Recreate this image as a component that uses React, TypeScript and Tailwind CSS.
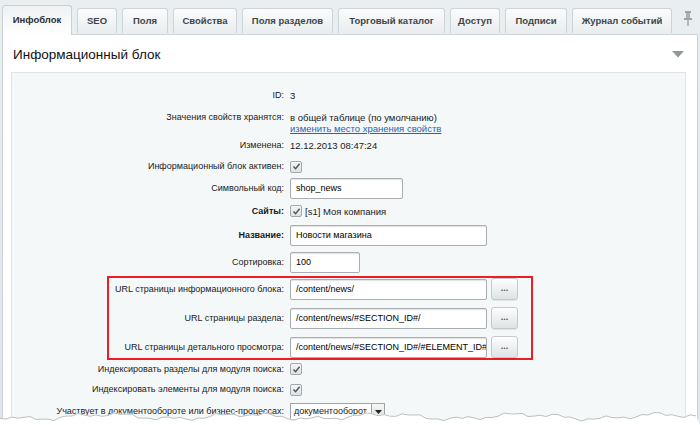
import React from "react";

const tabs: { label: string; w: string; active?: boolean }[] = [
  { label: "Инфоблок", w: "w-[70px]", active: true },
  { label: "SEO", w: "w-[40px]" },
  { label: "Поля", w: "w-[46px]" },
  { label: "Свойства", w: "w-[64px]" },
  { label: "Поля разделов", w: "w-[91px]" },
  { label: "Торговый каталог", w: "w-[107px]" },
  { label: "Доступ", w: "w-[50px]" },
  { label: "Подписи", w: "w-[62px]" },
  { label: "Журнал событий", w: "w-[100px]" },
];

function Check() {
  return (
    <span className="inline-flex w-[12px] h-[12px] rounded-[2px] border border-[#a3aaad] bg-gradient-to-b from-[#f4f6f7] to-[#dde2e4] items-center justify-center shrink-0">
      <svg width="9" height="9" viewBox="0 0 9 9">
        <path d="M1.5 4.6 L3.6 6.8 L7.6 1.8" fill="none" stroke="#4d5558" strokeWidth="1.4" />
      </svg>
    </span>
  );
}

function Input({ value, w }: { value: string; w: string }) {
  return (
    <div
      className={`${w} h-[21px] border border-[#a9aeb1] rounded-[2px] bg-white shadow-[inset_0_1px_1px_rgba(0,0,0,0.12)] flex items-center pl-[5px] overflow-hidden whitespace-nowrap text-[9px] text-[#000]`}
    >
      {value}
    </div>
  );
}

function DotsBtn() {
  return (
    <div className="w-[27px] h-[22px] ml-[4px] shrink-0 rounded-[3px] border border-[#c3c9cc] bg-gradient-to-b from-[#fdfdfd] to-[#dfe3e5] shadow-[0_1px_0_rgba(0,0,0,0.08)] flex items-center justify-center text-[9px] font-bold text-[#555] leading-none pb-[2px]">
      ...
    </div>
  );
}

function Row({
  label,
  h,
  bold,
  lw = "w-[274px]",
  children,
  top,
}: {
  label: string;
  h: string;
  bold?: boolean;
  lw?: string;
  children?: React.ReactNode;
  top?: boolean;
}) {
  return (
    <div className={`flex ${h} ${top ? "items-start pt-[6px]" : "items-center"}`}>
      <div
        className={`${lw} shrink-0 text-right pr-[2px] whitespace-nowrap ${bold ? "font-bold" : ""} text-[9px] leading-[11px] text-[#1a1a1a]`}
      >
        {label}
      </div>
      <div className="pl-[4px] flex items-center text-[9.5px] leading-[11px] text-[#1a1a1a]">{children}</div>
    </div>
  );
}

function Torn() {
  const pts: string[] = [];
  for (let x = 0; x <= 700; x += 6) {
    const y =
      9 +
      2.2 * Math.sin(x * 0.045) +
      1.5 * Math.sin(x * 0.13 + 1.3) +
      1.1 * Math.sin(x * 0.37 + 0.4);
    pts.push(`${x},${y.toFixed(1)}`);
  }
  const line = "M" + pts.join(" L");
  return (
    <svg className="absolute left-0 bottom-0" width="700" height="18" viewBox="0 0 700 18">
      <path d={`${line} L700,18 L0,18 Z`} fill="#ffffff" />
      <path d={line} fill="none" stroke="#b9bfc2" strokeWidth="1" transform="translate(0,0.6)" />
    </svg>
  );
}

export default function App() {
  return (
    <div className="relative w-[700px] h-[425px] overflow-hidden bg-gradient-to-b from-[#e9eef0] to-[#dfe5e8] font-['Liberation_Sans',Arial,sans-serif]">
      {/* tabs */}
      <div className="flex items-end h-[34px] pl-[2px] gap-[5px] relative z-10">
        {tabs.map((t) =>
          t.active ? (
            <div
              key={t.label}
              className={`${t.w} h-[30px] mb-[-1px] rounded-t-[3px] border border-b-0 border-[#c9d1d4] bg-gradient-to-b from-[#eef2f3] to-[#ffffff] flex items-center justify-center text-[9.5px] font-bold text-[#2b2f31]`}
            >
              {t.label}
            </div>
          ) : (
            <div
              key={t.label}
              className={`${t.w} h-[25px] mb-[1px] rounded-t-[3px] border border-b-0 border-[#cdd4d7] bg-gradient-to-b from-[#fbfcfc] to-[#e9edef] flex items-center justify-center text-[9.5px] font-bold text-[#3e4548]`}
            >
              {t.label}
            </div>
          )
        )}
        <div className="ml-[5px] mb-[8px] w-[12px] flex justify-center">
          <svg width="8" height="15" viewBox="0 0 8 15">
            <rect x="1" y="0" width="6" height="2" fill="#9ca4a8" />
            <rect x="2" y="2" width="4" height="5" fill="#aab2b5" />
            <rect x="0" y="7" width="8" height="2" fill="#9ca4a8" />
            <rect x="3.3" y="9" width="1.4" height="6" fill="#9ca4a8" />
          </svg>
        </div>
      </div>

      {/* panel */}
      <div className="mx-[2px] h-[400px] border border-[#cbd3d6] bg-white">
        <div className="h-[37px] flex items-center justify-between pl-[10px] pr-[13px]">
          <div className="text-[13.5px] text-[#111] pt-[4px]">Информационный блок</div>
          <svg width="12" height="7" viewBox="0 0 12 7" className="mt-[1px]">
            <path d="M0 0 L12 0 L6 6.5 Z" fill="#8f979a" />
          </svg>
        </div>
        <div className="ml-[8px] mr-[11px] h-[360px] border border-[#dde5e7] bg-[#f5f8f9] pt-[11px]">
          <Row label="ID:" h="h-[22px]">3</Row>
          <Row label="Значения свойств хранятся:" h="h-[28px]" top>
            <div className="flex flex-col">
              <span>в общей таблице (по умолчанию)</span>
              <span className="text-[#2166b6] underline">изменить место хранения свойств</span>
            </div>
          </Row>
          <Row label="Изменена:" h="h-[22px]">12.12.2013 08:47:24</Row>
          <Row label="Информационный блок активен:" h="h-[21px]">
            <Check />
          </Row>
          <Row label="Символьный код:" h="h-[23px]">
            <Input value="shop_news" w="w-[113px]" />
          </Row>
          <Row label="Сайты:" h="h-[22px]" bold>
            <Check />
            <span className="ml-[3px]">[s1] Моя компания</span>
          </Row>
          <Row label="Название:" h="h-[26px]" bold>
            <Input value="Новости магазина" w="w-[197px]" />
          </Row>
          <Row label="Сортировка:" h="h-[28px]">
            <Input value="100" w="w-[70px]" />
          </Row>

          <div className="ml-[95px] w-[426px] border-2 border-[#ee1c25] flex flex-col gap-[7px]">
            <Row label="URL страницы информационного блока:" h="h-[22px]" lw="w-[177px]">
              <Input value="/content/news/" w="w-[197px]" />
              <DotsBtn />
            </Row>
            <Row label="URL страницы раздела:" h="h-[22px]" lw="w-[177px]">
              <Input value="/content/news/#SECTION_ID#/" w="w-[197px]" />
              <DotsBtn />
            </Row>
            <Row label="URL страницы детального просмотра:" h="h-[22px]" lw="w-[177px]">
              <Input value="/content/news/#SECTION_ID#/#ELEMENT_ID#/" w="w-[197px]" />
              <DotsBtn />
            </Row>
          </div>

          <Row label="Индексировать разделы для модуля поиска:" h="h-[18px]">
            <Check />
          </Row>
          <Row label="Индексировать элементы для модуля поиска:" h="h-[23px]">
            <Check />
          </Row>
          <Row label="Участвует в документообороте или бизнес-процессах:" h="h-[21px]">
            <div className="w-[95px] h-[17px] border border-[#9fa5a8] bg-white flex items-center justify-between pl-[3px] text-[9px] overflow-hidden">
              <span className="whitespace-nowrap">документооборот</span>
              <span className="w-[13px] h-[15px] shrink-0 border-l border-[#9fa5a8] bg-gradient-to-b from-[#f7f7f7] to-[#dcdcdc] flex items-center justify-center">
                <svg width="7" height="4" viewBox="0 0 7 4">
                  <path d="M0 0 L7 0 L3.5 4 Z" fill="#222" />
                </svg>
              </span>
            </div>
          </Row>
        </div>
      </div>

      <Torn />
    </div>
  );
}
